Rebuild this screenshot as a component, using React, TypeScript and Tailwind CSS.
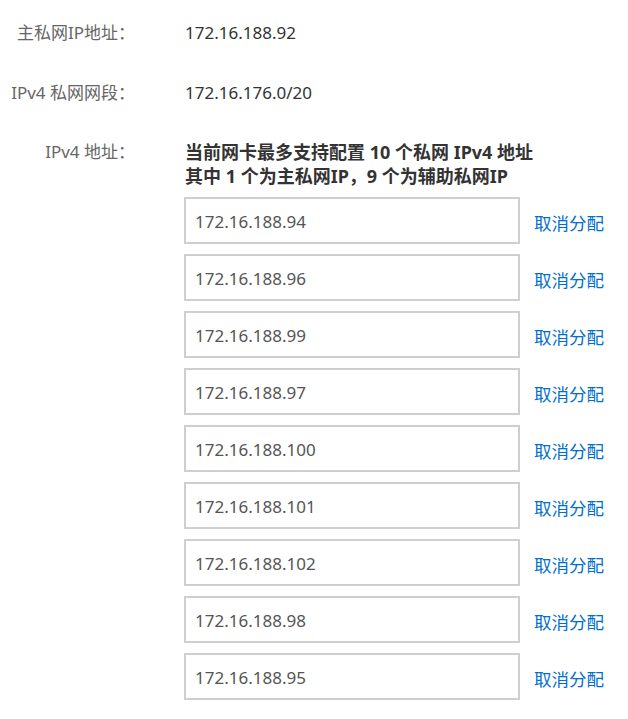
import React from "react";

const ips = [
  "172.16.188.94",
  "172.16.188.96",
  "172.16.188.99",
  "172.16.188.97",
  "172.16.188.100",
  "172.16.188.101",
  "172.16.188.102",
  "172.16.188.98",
  "172.16.188.95",
];

const font = { fontFamily: '"Noto Sans", "Noto Sans CJK SC", sans-serif' };

export default function App() {
  return (
    <div className="w-[628px] h-[719px] bg-white pt-[21px] text-[17px] leading-[24px]" style={font}>
      <div className="flex">
        <div className="w-[135px] text-right text-[#666]">主私网IP地址：</div>
        <div className="ml-[50px] text-[#333]">172.16.188.92</div>
      </div>
      <div className="flex mt-[36px]">
        <div className="w-[135px] text-right text-[#666]">IPv4 私网网段：</div>
        <div className="ml-[50px] text-[#333]">172.16.176.0/20</div>
      </div>
      <div className="flex mt-[35px]">
        <div className="w-[135px] text-right text-[#666]">IPv4 地址：</div>
        <div className="ml-[49px] flex flex-col">
          <div className="font-bold text-[#333] text-[18px] pl-[1px]">
            <div>当前网卡最多支持配置 10 个私网 IPv4 地址</div>
            <div>其中 1 个为主私网IP，9 个为辅助私网IP</div>
          </div>
          <div className="mt-[9px] flex flex-col gap-[10px]">
            {ips.map((ip) => (
              <div key={ip} className="flex items-center">
                <div className="w-[336px] h-[47px] border-2 border-[#cfcfcf] flex items-center pl-[9px] pt-[3px] text-[#555]">
                  {ip}
                </div>
                <a className="ml-[14px] pt-[5px] text-[#0070cc] text-[17.5px] cursor-pointer">取消分配</a>
              </div>
            ))}
          </div>
        </div>
      </div>
    </div>
  );
}
